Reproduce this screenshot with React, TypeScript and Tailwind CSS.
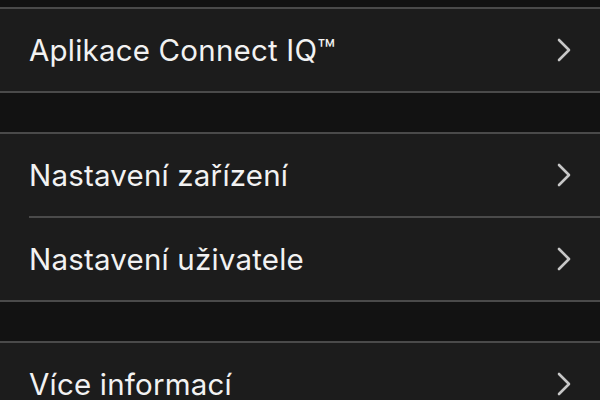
import { Fragment } from "react";

type Row = { label: string };

const groups: Row[][] = [
    [{ label: "Aplikace Connect IQ™" }],
    [{ label: "Nastavení zařízení" }, { label: "Nastavení uživatele" }],
    [{ label: "Více informací" }],
];

function Chevron() {
    return (
        <svg width="16" height="26" viewBox="0 0 16 26" className="shrink-0">
            <path d="M3 3 L13 13 L3 23" fill="none" stroke="#c7c7c7" strokeWidth="2.6" strokeLinecap="round" strokeLinejoin="round" />
        </svg>
    );
}

export default function App() {
    return (
        <div className="w-[600px] h-[400px] overflow-hidden bg-[#121212] font-['Inter','Noto_Sans',sans-serif]">
            <div className="h-[7px]" />
            {groups.map((group, gi) => (
                <Fragment key={gi}>
                    {gi > 0 && <div className="h-[39px]" />}
                    <div className="bg-[#1c1c1c] border-y-2 border-[#4a4a4a]">
                        {group.map((row, ri) => (
                            <div key={row.label} className="pl-[29px]">
                                <div className={"flex items-center justify-between pr-[28px] " + (ri > 0 ? "h-[84px] border-t-2 border-[#4a4a4a]" : "h-[82px]")}>
                                    <span className="text-[29.5px] text-[#f2f2f2] tracking-[0.2px]">{row.label}</span>
                                    <Chevron />
                                </div>
                            </div>
                        ))}
                    </div>
                </Fragment>
            ))}
        </div>
    );
}
